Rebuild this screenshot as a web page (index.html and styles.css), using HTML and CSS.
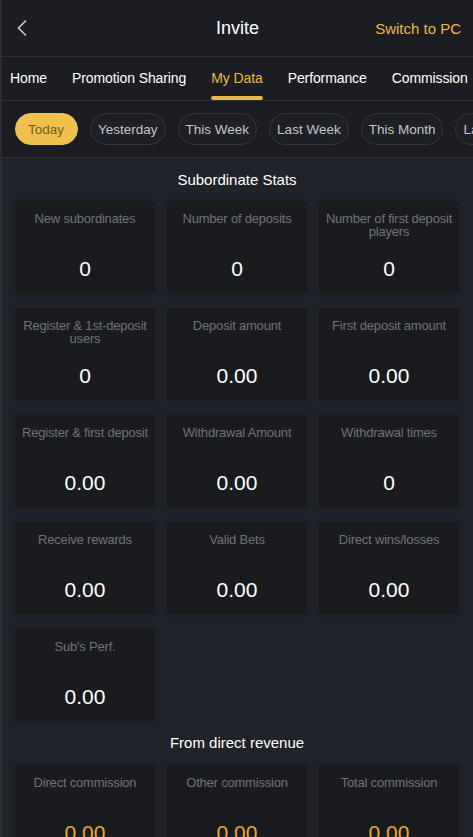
FILE: index.html
```html
<!DOCTYPE html>
<html>
<head>
<meta charset="utf-8">
<link rel="stylesheet" href="styles.css">
</head>
<body>
<div class="app">
  <header class="topbar">
    <span class="back">
      <svg width="14" height="18" viewBox="0 0 14 18"><path d="M11 1.5 L3.5 9 L11 16.5" fill="none" stroke="#c9cbd0" stroke-width="1.6"/></svg>
    </span>
    <h1 class="title">Invite</h1>
    <span class="switch">Switch to PC</span>
  </header>
  <nav class="tabs">
    <span class="tab">Home</span>
    <span class="tab">Promotion Sharing</span>
    <span class="tab active">My Data</span>
    <span class="tab">Performance</span>
    <span class="tab">Commission</span>
  </nav>
  <div class="chips">
    <span class="chip on">Today</span>
    <span class="chip">Yesterday</span>
    <span class="chip">This Week</span>
    <span class="chip">Last Week</span>
    <span class="chip">This Month</span>
    <span class="chip">Last Month</span>
  </div>
  <main class="content">
    <h2 class="sec">Subordinate Stats</h2>
    <div class="grid">
      <div class="card"><div class="lbl">New subordinates</div><div class="val">0</div></div>
      <div class="card"><div class="lbl">Number of deposits</div><div class="val">0</div></div>
      <div class="card"><div class="lbl">Number of first deposit players</div><div class="val">0</div></div>
      <div class="card"><div class="lbl">Register &amp; 1st-deposit users</div><div class="val">0</div></div>
      <div class="card"><div class="lbl">Deposit amount</div><div class="val">0.00</div></div>
      <div class="card"><div class="lbl">First deposit amount</div><div class="val">0.00</div></div>
      <div class="card"><div class="lbl">Register &amp; first deposit</div><div class="val">0.00</div></div>
      <div class="card"><div class="lbl">Withdrawal Amount</div><div class="val">0.00</div></div>
      <div class="card"><div class="lbl">Withdrawal times</div><div class="val">0</div></div>
      <div class="card"><div class="lbl">Receive rewards</div><div class="val">0.00</div></div>
      <div class="card"><div class="lbl">Valid Bets</div><div class="val">0.00</div></div>
      <div class="card"><div class="lbl">Direct wins/losses</div><div class="val">0.00</div></div>
      <div class="card"><div class="lbl">Sub's Perf.</div><div class="val">0.00</div></div>
    </div>
    <h2 class="sec sec2">From direct revenue</h2>
    <div class="grid">
      <div class="card"><div class="lbl">Direct commission</div><div class="val gold">0.00</div></div>
      <div class="card"><div class="lbl">Other commission</div><div class="val gold">0.00</div></div>
      <div class="card"><div class="lbl">Total commission</div><div class="val gold">0.00</div></div>
    </div>
  </main>
</div>
</body>
</html>
```

FILE: styles.css
```css
* { box-sizing: border-box; margin: 0; padding: 0; }
html, body { width: 473px; height: 837px; overflow: hidden; }
body { background: #20232a; font-family: "Liberation Sans", Arial, sans-serif; }
.app { display: flex; flex-direction: column; border-left: 2px solid #2a2d34; min-height: 837px; }
.topbar {
  height: 57px; background: #1c1d22; border-bottom: 1px solid #2d3037;
  display: flex; align-items: center; justify-content: space-between;
  padding: 0 12px 0 13px; position: relative;
}
.back { display: flex; align-items: center; width: 20px; }
.title {
  font-size: 18px; font-weight: normal; color: #ffffff;
  position: absolute; left: 0; right: 0; text-align: center; pointer-events: none;
}
.switch { font-size: 15px; color: #e9b84b; }
.tabs {
  height: 44px; background: #1c1d22; border-bottom: 1px solid #2d3037;
  display: flex; gap: 25px; padding-left: 8px; white-space: nowrap; overflow: hidden;
}
.tab {
  font-size: 14px; letter-spacing: -0.1px; color: #ffffff; display: flex; align-items: center; position: relative;
  padding-bottom: 2px; flex: none;
}
.tab.active { color: #e9b84b; }
.tab.active::after {
  content: ""; position: absolute; left: 0; right: 0; bottom: 0; height: 4px;
  background: #e9b84b; border-radius: 2px;
}
.chips {
  height: 57px; background: #1c1d22; border-bottom: 1px solid #2d3037;
  display: flex; align-items: center; gap: 12px; padding-left: 13px;
  white-space: nowrap; overflow: hidden;
}
.chip {
  flex: none; height: 32px; padding: 0 7px; border-radius: 16px;
  border: 1px solid #33363e; color: #c3c6cc; font-size: 13.5px;
  display: flex; align-items: center; background: #1e2026;
}
.chip.on { background: #efc04e; border-color: #efc04e; color: #7a5820; padding: 0 13px 0 12px; }
.content { padding: 0 14px 0 13px; }
.sec {
  font-size: 15px; font-weight: normal; color: #ffffff; text-align: center;
  height: 43px; line-height: 44px;
}
.sec2 { height: 44px; line-height: 44px; margin-top: 0; }
.grid { display: grid; grid-template-columns: repeat(3, 140px); column-gap: 12px; row-gap: 15px; }
.card {
  height: 92px; background: #1a1b1f; border-radius: 3px;
  padding: 11px 4px 0; display: flex; flex-direction: column; align-items: center;
  box-shadow: 0 0 6px rgba(0,0,0,0.15);
}
.lbl {
  font-size: 13px; line-height: 13px; height: 28px; color: #6f737b;
  text-align: center; letter-spacing: -0.2px;
}
.val { font-size: 21px; color: #ffffff; margin-top: 17px; line-height: 24px; }
.val.gold { color: #e9a82b; }
```
